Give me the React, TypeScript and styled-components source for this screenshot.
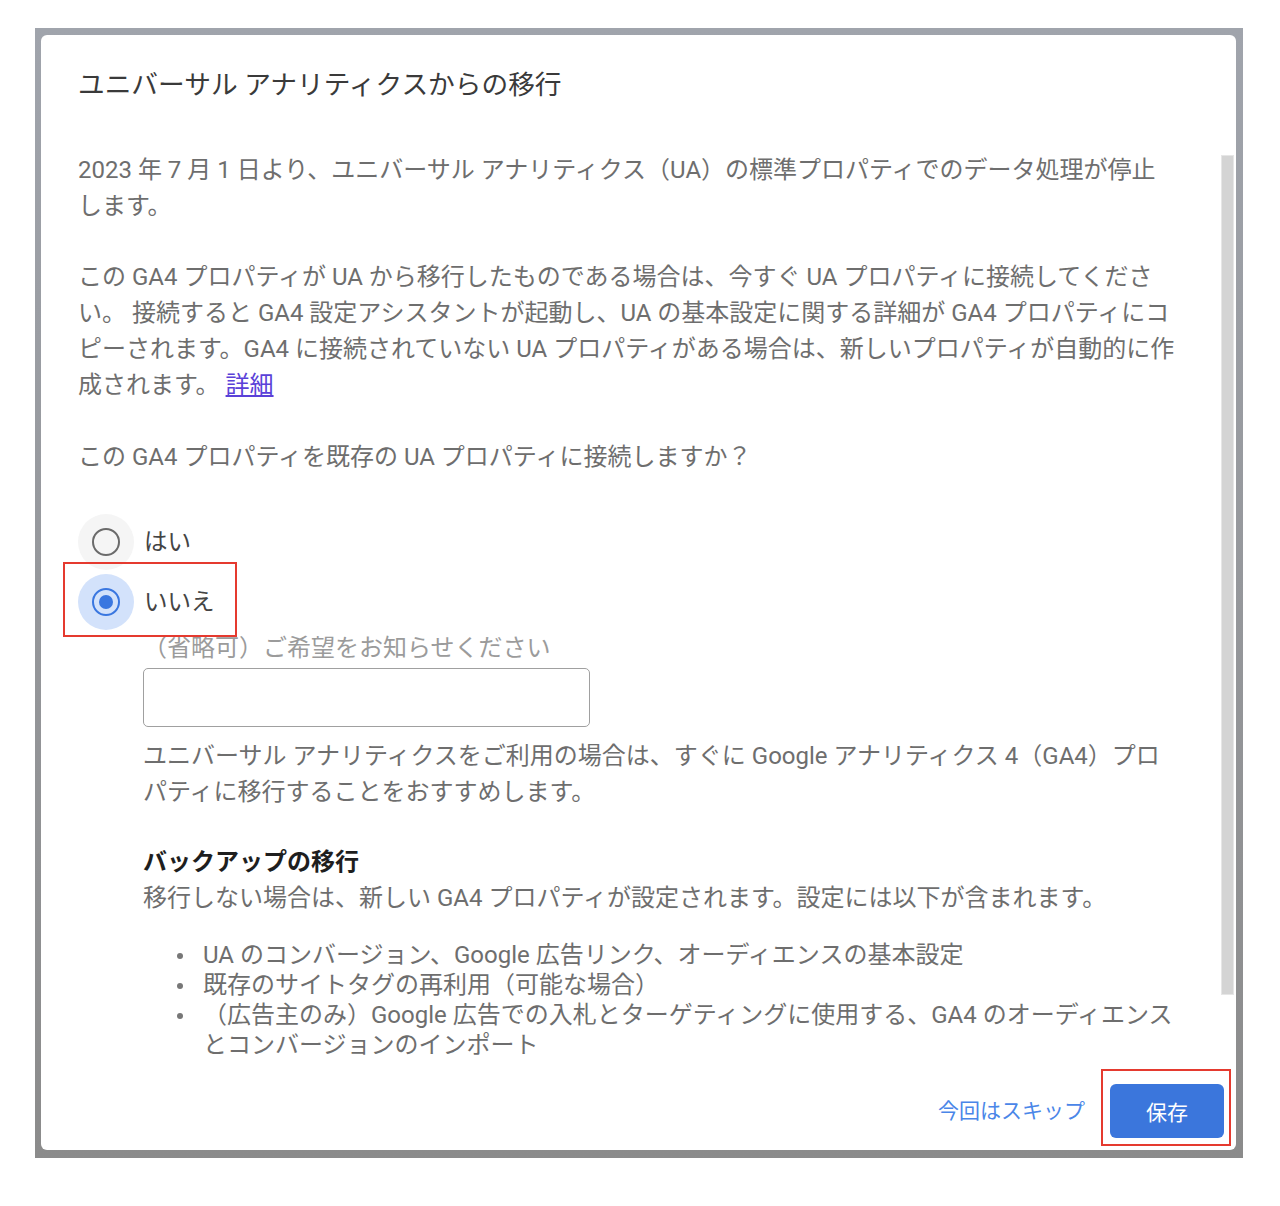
import styled, { createGlobalStyle } from "styled-components";

const GlobalStyle = createGlobalStyle`
  html, body {
    margin: 0;
    padding: 0;
    background: #fff;
  }
  body {
    font-family: Roboto, "Noto Sans CJK JP", sans-serif;
  }
`;

const Page = styled.div`
  width: 1280px;
  height: 1206px;
  padding: 28px 0 0 35px;
  box-sizing: border-box;
`;

const Backdrop = styled.div`
  width: 1208px;
  height: 1130px;
  box-sizing: border-box;
  padding: 7px 7px 8px 6px;
  background: linear-gradient(#a0a4ac, #8b8b8b);
  display: flex;
`;

const Dialog = styled.div`
  flex: 1;
  display: flex;
  flex-direction: column;
  background: #fff;
  border-radius: 6px;
  overflow: hidden;
`;

const Title = styled.h2`
  margin: 0;
  padding: 32px 37px 27px;
  font-size: 26.7px;
  font-weight: 400;
  line-height: 36px;
  color: #3a3a3a;
`;

const Body = styled.div`
  flex: 1;
  min-height: 0;
  display: flex;
`;

const Scroll = styled.div`
  flex: 1;
  overflow: hidden;
  padding: 22px 44px 0 37px;
`;

const ScrollTrack = styled.div`
  flex: none;
  width: 15px;
`;

const ScrollThumb = styled.div`
  margin-top: 25px;
  width: 13px;
  height: 840px;
  box-sizing: border-box;
  background: #d4d4d4;
  border: 1px solid #e6e6e6;
`;

const Paragraph = styled.p<{ $gap?: number }>`
  margin: 0 0 ${(p) => p.$gap ?? 35}px;
  font-size: 24px;
  line-height: 36px;
  color: #6e6e6e;
`;

const Link = styled.a`
  color: #5a41d8;
  text-decoration: underline;
`;

const RadioGroup = styled.div`
  display: flex;
  flex-direction: column;
  align-items: flex-start;
`;

const RadioRow = styled.div`
  position: relative;
  display: flex;
  align-items: center;
  gap: 10px;
  height: 60px;
`;

const Halo = styled.span<{ $checked?: boolean }>`
  width: 56px;
  height: 56px;
  border-radius: 50%;
  display: flex;
  align-items: center;
  justify-content: center;
  background: ${(p) => (p.$checked ? "#d3e2fb" : "#f5f5f5")};
`;

const Ring = styled.span<{ $checked?: boolean }>`
  width: 28px;
  height: 28px;
  box-sizing: border-box;
  border-radius: 50%;
  border: 2.5px solid ${(p) => (p.$checked ? "#3a77e0" : "#6b6b6b")};
  display: flex;
  align-items: center;
  justify-content: center;

  &::after {
    content: "";
    display: ${(p) => (p.$checked ? "block" : "none")};
    width: 14px;
    height: 14px;
    border-radius: 50%;
    background: #3a77e0;
  }
`;

const RadioLabel = styled.span`
  font-size: 23.5px;
  line-height: 36px;
  color: #444;
`;

const Highlight = styled.span<{ $top: number; $left: number; $w: number; $h: number }>`
  position: absolute;
  top: ${(p) => p.$top}px;
  left: ${(p) => p.$left}px;
  width: ${(p) => p.$w}px;
  height: ${(p) => p.$h}px;
  box-sizing: border-box;
  border: 2px solid #e53a2f;
  pointer-events: none;
`;

const Indented = styled.div`
  margin-left: 65px;
`;

const FieldLabel = styled.div`
  margin-top: 1px;
  font-size: 24px;
  line-height: 30px;
  color: #9b9b9b;
`;

const TextInput = styled.input`
  display: block;
  margin-top: 5px;
  width: 447px;
  height: 59px;
  box-sizing: border-box;
  border: 1px solid #a0a0a0;
  border-radius: 5px;
  background: #fff;
  font-family: inherit;
  font-size: 20px;
  padding: 0 12px;
  outline: none;
`;

const Helper = styled.p`
  margin: 11px 0 0;
  font-size: 24px;
  line-height: 36px;
  color: #6e6e6e;
`;

const SectionHeading = styled.h3`
  margin: 34px 0 0;
  font-size: 24px;
  font-weight: 700;
  line-height: 36px;
  color: #1e1e1e;
`;

const SectionText = styled.p`
  margin: 0;
  font-size: 24px;
  line-height: 36px;
  color: #6e6e6e;
`;

const BulletList = styled.ul`
  margin: 24px 0 0;
  padding-left: 60px;
  list-style: none;
  font-size: 24px;
  line-height: 30px;
  color: #6e6e6e;

  li {
    position: relative;
  }

  li::before {
    content: "";
    position: absolute;
    left: -26px;
    top: 13px;
    width: 6px;
    height: 6px;
    border-radius: 50%;
    background: #777;
  }
`;

const Footer = styled.div`
  flex: none;
  display: flex;
  justify-content: flex-end;
  align-items: center;
  gap: 25px;
  padding: 14px 12px 12px 0;
`;

const SkipButton = styled.button`
  border: none;
  background: none;
  padding: 0;
  font-family: inherit;
  font-size: 21px;
  line-height: 30px;
  color: #4a86e8;
  cursor: pointer;
`;

const SaveButton = styled.button`
  position: relative;
  width: 114px;
  height: 54px;
  border: none;
  border-radius: 6px;
  background: #3b76dc;
  color: #fff;
  font-family: inherit;
  font-size: 21px;
  cursor: pointer;
`;

const Radio = ({ label, checked = false, highlight = false }: RadioProps) => (
  <RadioRow>
    <Halo $checked={checked}>
      <Ring $checked={checked} />
    </Halo>
    <RadioLabel>{label}</RadioLabel>
    {highlight && <Highlight $top={-10} $left={-15} $w={174} $h={75} />}
  </RadioRow>
);

type RadioProps = {
  label: string;
  checked?: boolean;
  highlight?: boolean;
};

const App = () => {
  return (
    <>
      <GlobalStyle />
      <Page>
        <Backdrop>
          <Dialog>
            <Title>ユニバーサル アナリティクスからの移行</Title>
            <Body>
              <Scroll>
                <Paragraph>
                  2023 年 7 月 1 日より、ユニバーサル アナリティクス（UA）の標準プロパティでのデータ処理が停止します。
                </Paragraph>
                <Paragraph $gap={36}>
                  この GA4 プロパティが UA から移行したものである場合は、今すぐ UA プロパティに接続してください。
                  接続すると GA4 設定アシスタントが起動し、UA の基本設定に関する詳細が GA4 プロパティにコピーされます。GA4 に接続されていない UA プロパティがある場合は、新しいプロパティが自動的に作成されます。{" "}
                  <Link href="#">詳細</Link>
                </Paragraph>
                <Paragraph $gap={37}>
                  この GA4 プロパティを既存の UA プロパティに接続しますか？
                </Paragraph>
                <RadioGroup>
                  <Radio label="はい" />
                  <Radio label="いいえ" checked highlight />
                </RadioGroup>
                <Indented>
                  <FieldLabel>（省略可）ご希望をお知らせください</FieldLabel>
                  <TextInput type="text" />
                  <Helper>
                    ユニバーサル アナリティクスをご利用の場合は、すぐに Google アナリティクス 4（GA4）プロパティに移行することをおすすめします。
                  </Helper>
                  <SectionHeading>バックアップの移行</SectionHeading>
                  <SectionText>
                    移行しない場合は、新しい GA4 プロパティが設定されます。設定には以下が含まれます。
                  </SectionText>
                  <BulletList>
                    <li>UA のコンバージョン、Google 広告リンク、オーディエンスの基本設定</li>
                    <li>既存のサイトタグの再利用（可能な場合）</li>
                    <li>
                      （広告主のみ）Google 広告での入札とターゲティングに使用する、GA4 のオーディエンスとコンバージョンのインポート
                    </li>
                  </BulletList>
                </Indented>
              </Scroll>
              <ScrollTrack>
                <ScrollThumb />
              </ScrollTrack>
            </Body>
            <Footer>
              <SkipButton>今回はスキップ</SkipButton>
              <SaveButton>
                保存
                <Highlight $top={-15} $left={-9} $w={130} $h={77} />
              </SaveButton>
            </Footer>
          </Dialog>
        </Backdrop>
      </Page>
    </>
  );
};

export default App;
